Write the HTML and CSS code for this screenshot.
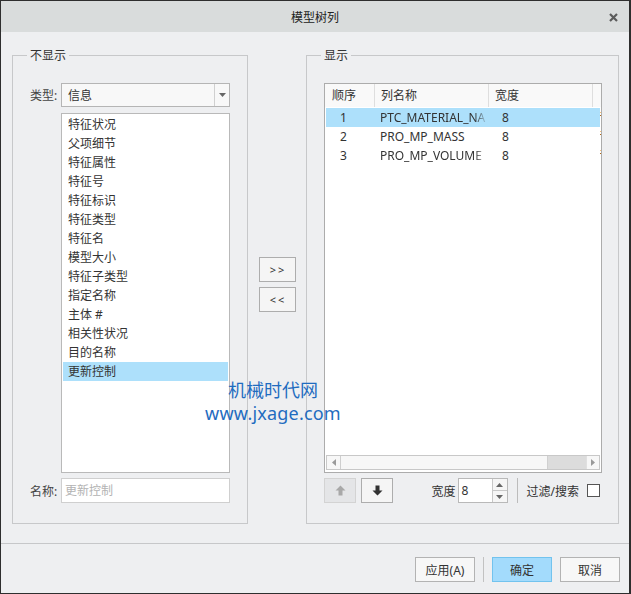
FILE: index.html
```html
<!DOCTYPE html>
<html lang="zh">
<head>
<meta charset="utf-8">
<title>模型树列</title>
<link rel="stylesheet" href="styles.css">
</head>
<body>
<div class="window">
  <div class="titlebar">
    <span class="title">模型树列</span>
    <span class="close"><svg width="9" height="9" viewBox="0 0 9 9"><path d="M1 1 L8 8 M8 1 L1 8" stroke="#5b5b5b" stroke-width="2.2" fill="none"/></svg></span>
  </div>
  <div class="main">
    <div class="group group-left">
      <span class="group-title">不显示</span>
      <span class="label label-type">类型:</span>
      <div class="combo">
        <span class="combo-text">信息</span>
        <span class="combo-btn"><svg width="7" height="4" viewBox="0 0 7 4"><path d="M0 0 H7 L3.5 4 Z" fill="#666"/></svg></span>
      </div>
      <ul class="list">
        <li>特征状况</li>
        <li>父项细节</li>
        <li>特征属性</li>
        <li>特征号</li>
        <li>特征标识</li>
        <li>特征类型</li>
        <li>特征名</li>
        <li>模型大小</li>
        <li>特征子类型</li>
        <li>指定名称</li>
        <li>主体 #</li>
        <li>相关性状况</li>
        <li>目的名称</li>
        <li class="selected">更新控制</li>
      </ul>
      <span class="label label-name">名称:</span>
      <div class="name-input">更新控制</div>
    </div>
    <div class="middle">
      <button class="btn small-btn">&gt; &gt;</button>
      <button class="btn small-btn">&lt; &lt;</button>
    </div>
    <div class="group group-right">
      <span class="group-title">显示</span>
      <div class="table">
        <div class="thead">
          <span class="th c1">顺序</span>
          <span class="th c2">列名称</span>
          <span class="th c3">宽度</span>
          <span class="th c4"></span>
        </div>
        <div class="tbody">
          <div class="tr selected"><span class="td c1">1</span><span class="td c2 fade">PTC_MATERIAL_NA</span><span class="td c3">8</span><span class="mark"></span></div>
          <div class="tr"><span class="td c1">2</span><span class="td c2">PRO_MP_MASS</span><span class="td c3">8</span><span class="mark"></span></div>
          <div class="tr"><span class="td c1">3</span><span class="td c2 fade">PRO_MP_VOLUME</span><span class="td c3">8</span><span class="mark"></span></div>
        </div>
        <div class="hscroll">
          <span class="sb-arrow"><svg width="4" height="7" viewBox="0 0 4 7"><path d="M4 0 V7 L0 3.5 Z" fill="#9a9a9a"/></svg></span>
          <span class="sb-thumb"></span>
          <span class="sb-track"></span>
          <span class="sb-arrow right"><svg width="4" height="7" viewBox="0 0 4 7"><path d="M0 0 V7 L4 3.5 Z" fill="#9a9a9a"/></svg></span>
        </div>
      </div>
      <div class="controls">
        <button class="btn arrow-btn disabled"><svg width="11" height="11" viewBox="0 0 11 11"><path d="M5.5 0.5 L10.5 5.5 H7.5 V10.5 H3.5 V5.5 H0.5 Z" fill="#a8a8a8"/></svg></button>
        <button class="btn arrow-btn"><svg width="11" height="11" viewBox="0 0 11 11"><path d="M5.5 10.5 L10.5 5.5 H7.5 V0.5 H3.5 V5.5 H0.5 Z" fill="#333"/></svg></button>
        <span class="width-label">宽度</span>
        <div class="spinner">
          <span class="spin-value">8</span>
          <span class="spin-btns">
            <span class="spin-up"><svg width="7" height="4" viewBox="0 0 7 4"><path d="M0 4 H7 L3.5 0 Z" fill="#666"/></svg></span>
            <span class="spin-down"><svg width="7" height="4" viewBox="0 0 7 4"><path d="M0 0 H7 L3.5 4 Z" fill="#666"/></svg></span>
          </span>
        </div>
        <span class="vsep"></span>
        <span class="filter-label">过滤/搜索</span>
        <span class="checkbox"></span>
      </div>
    </div>
  </div>
  <div class="hsep"></div>
  <div class="footer">
    <button class="btn foot-btn">应用(A)</button>
    <span class="foot-sep"></span>
    <button class="btn foot-btn primary">确定</button>
    <button class="btn foot-btn">取消</button>
  </div>
  <div class="watermark">
    <div class="wm-cn">机械时代网</div>
    <div class="wm-en">www.jxage.com</div>
  </div>
</div>
</body>
</html>
```

FILE: styles.css
```css
* { box-sizing: border-box; }
html, body { margin: 0; padding: 0; background: #fff; }
body {
  font-family: "Noto Sans", "Noto Sans CJK SC", sans-serif;
  font-size: 12px;
  color: #333;
}
.window {
  width: 631px;
  height: 594px;
  border: 1px solid #2e2e2e;
  border-right-width: 2px;
  background: #eeeff1;
  display: flex;
  flex-direction: column;
  position: relative;
  overflow: hidden;
}
.titlebar {
  height: 31px;
  background: #d9dcdc;
  display: flex;
  align-items: center;
  justify-content: center;
  position: relative;
  flex: none;
}
.title { color: #222; font-size: 12px; }
.close {
  position: absolute;
  right: 11px;
  top: 12px;
  width: 9px;
  height: 9px;
  display: flex;
}
.main {
  display: flex;
  padding: 23px 0 0 11px;
  flex: none;
}
.group {
  position: relative;
  border: 1px solid #c7c8ca;
  height: 469px;
}
.group-title {
  position: absolute;
  top: -8px;
  left: 14px;
  line-height: 16px;
  padding: 0 3px;
  background: #eeeff1;
  color: #333;
}
.group-left {
  width: 236px;
  padding: 27px 17px 20px 17px;
  display: grid;
  grid-template-columns: 31px 169px;
  grid-template-rows: 24px 1fr 25px;
}
.label-type { grid-column: 1; grid-row: 1; }
.combo { grid-column: 2; grid-row: 1; }
.group-left .list { grid-column: 2; grid-row: 2; margin: 6px 0 5px 0; }
.label-name { grid-column: 1; grid-row: 3; }
.name-input { grid-column: 2; grid-row: 3; }
.label {
  align-self: center;
  color: #444;
}
.combo {
  border: 1px solid #b5b5b5;
  background: #f8f8f8;
  display: flex;
  align-items: center;
}
.combo-text { flex: 1; padding-left: 6px; color: #333; }
.combo-btn {
  width: 15px;
  height: 100%;
  border-left: 1px solid #d0d0d0;
  display: flex;
  align-items: center;
  justify-content: center;
}
.list {
  list-style: none;
  margin: 0;
  padding: 1px;
  border: 1px solid #b9b9b9;
  background: #fff;
}
.list li {
  height: 19px;
  line-height: 19px;
  padding-left: 5px;
  color: #333;
  white-space: nowrap;
}
.list li.selected { background: #ade0fb; }
.name-input {
  border: 1px solid #cfcfcf;
  background: #fff;
  color: #b3b3b3;
  line-height: 23px;
  padding-left: 3px;
}
.middle {
  width: 58px;
  display: flex;
  flex-direction: column;
  align-items: center;
  padding-top: 202px;
  gap: 5px;
}
.btn {
  font-family: inherit;
  font-size: 12px;
  color: #333;
  background: #f5f5f5;
  border: 1px solid #adadad;
  border-radius: 0;
  padding: 0;
  margin: 0;
  display: flex;
  align-items: center;
  justify-content: center;
}
.small-btn { width: 37px; height: 25px; font-size: 11px; letter-spacing: 0; word-spacing: -1px; }
.group-right {
  width: 313px;
  padding: 27px 16px 20px 17px;
  display: flex;
  flex-direction: column;
}
.table {
  flex: 1;
  border: 1px solid #acacac;
  background: #fff;
  display: flex;
  flex-direction: column;
}
.thead {
  height: 23px;
  background: #f9f9f9;
  display: flex;
  flex: none;
}
.th {
  line-height: 23px;
  color: #333;
  white-space: nowrap;
}
.thead .c1 { width: 49px; padding-left: 7px; }
.thead .c2 { width: 114px; padding-left: 6px; border-left: 1px solid #dedede; }
.thead .c3 { width: 104px; padding-left: 6px; border-left: 1px solid #dedede; }
.thead .c4 { flex: 1; border-left: 1px solid #dedede; }
.tbody {
  flex: 1;
  padding: 1px 1px 0 1px;
}
.tr {
  height: 19px;
  display: flex;
  position: relative;
}
.tr.selected { background: #ade0fb; }
.td { line-height: 19px; white-space: nowrap; overflow: hidden; color: #333; }
.tbody .c1 { width: 48px; padding-left: 14px; }
.tbody .c2 { width: 114px; padding-left: 6px; }
.tbody .c2.fade {
  -webkit-mask-image: linear-gradient(to right, #000 88%, transparent 100%);
  mask-image: linear-gradient(to right, #000 88%, transparent 100%);
}
.tbody .c3 { padding-left: 14px; }
.mark {
  position: absolute;
  right: -1px;
  top: 4px;
  width: 1px;
  height: 6px;
  background: linear-gradient(#f6c078 0 1px, transparent 1px 3px, #b06a1c 3px 4px, transparent 4px);
}
.hscroll {
  height: 15px;
  margin: 0 1px 2px 1px;
  border: 1px solid #c8c8c8;
  background: #f7f7f7;
  display: flex;
  flex: none;
}
.sb-arrow {
  width: 14px;
  display: flex;
  align-items: center;
  justify-content: center;
  border-right: 1px solid #cfcfcf;
}
.sb-arrow.right { border-right: 0; border-left: 1px solid #e0e0e0; width: 13px; }
.sb-thumb { width: 207px; background: #f7f7f7; border-right: 1px solid #d0d0d0; }
.sb-track { flex: 1; background: #dcdcdc; }
.controls {
  margin-top: 5px;
  height: 25px;
  display: flex;
  align-items: center;
  flex: none;
}
.arrow-btn { width: 32px; height: 25px; }
.arrow-btn + .arrow-btn { margin-left: 5px; }
.arrow-btn.disabled { background: #e4e5e7; border-color: #d3d3d3; }
.width-label { margin-left: auto; margin-right: 2px; }
.spinner {
  width: 50px;
  height: 25px;
  border: 1px solid #b9b9b9;
  background: #fff;
  display: flex;
}
.spin-value { flex: 1; padding-left: 3px; line-height: 23px; }
.spin-btns {
  width: 15px;
  border-left: 1px solid #c8c8c8;
  display: flex;
  flex-direction: column;
  background: #f6f6f6;
}
.spin-up, .spin-down {
  flex: 1;
  display: flex;
  align-items: center;
  justify-content: center;
}
.spin-up { border-bottom: 1px solid #c8c8c8; }
.vsep { width: 1px; height: 25px; background: #bcbcbc; margin-left: 9px; margin-right: 9px; }
.filter-label { margin-right: 8px; }
.checkbox {
  width: 13px;
  height: 13px;
  border: 1px solid #555;
  background: #fff;
  margin-right: 2px;
}
.hsep {
  height: 1px;
  background: #c6c7c9;
  margin-top: 19px;
  flex: none;
}
.footer {
  display: flex;
  justify-content: flex-end;
  align-items: center;
  padding: 13px 9px 0 0;
  gap: 8px;
}
.foot-btn { width: 60px; height: 25px; background: #f7f7f7; border-color: #b3b3b3; }
.foot-btn.primary { background: #a3dbfc; border-color: #72c3ee; }
.foot-sep { width: 1px; height: 25px; background: #c2c2c2; }
.watermark {
  position: absolute;
  left: 200px;
  top: 376px;
  width: 144px;
  text-align: center;
  color: #1f6cc0;
  font-size: 18px;
  line-height: 24px;
}
.wm-cn { font-family: "Noto Sans CJK SC", sans-serif; }
.wm-en { font-family: "Noto Sans", sans-serif; letter-spacing: 0.2px; }
```
